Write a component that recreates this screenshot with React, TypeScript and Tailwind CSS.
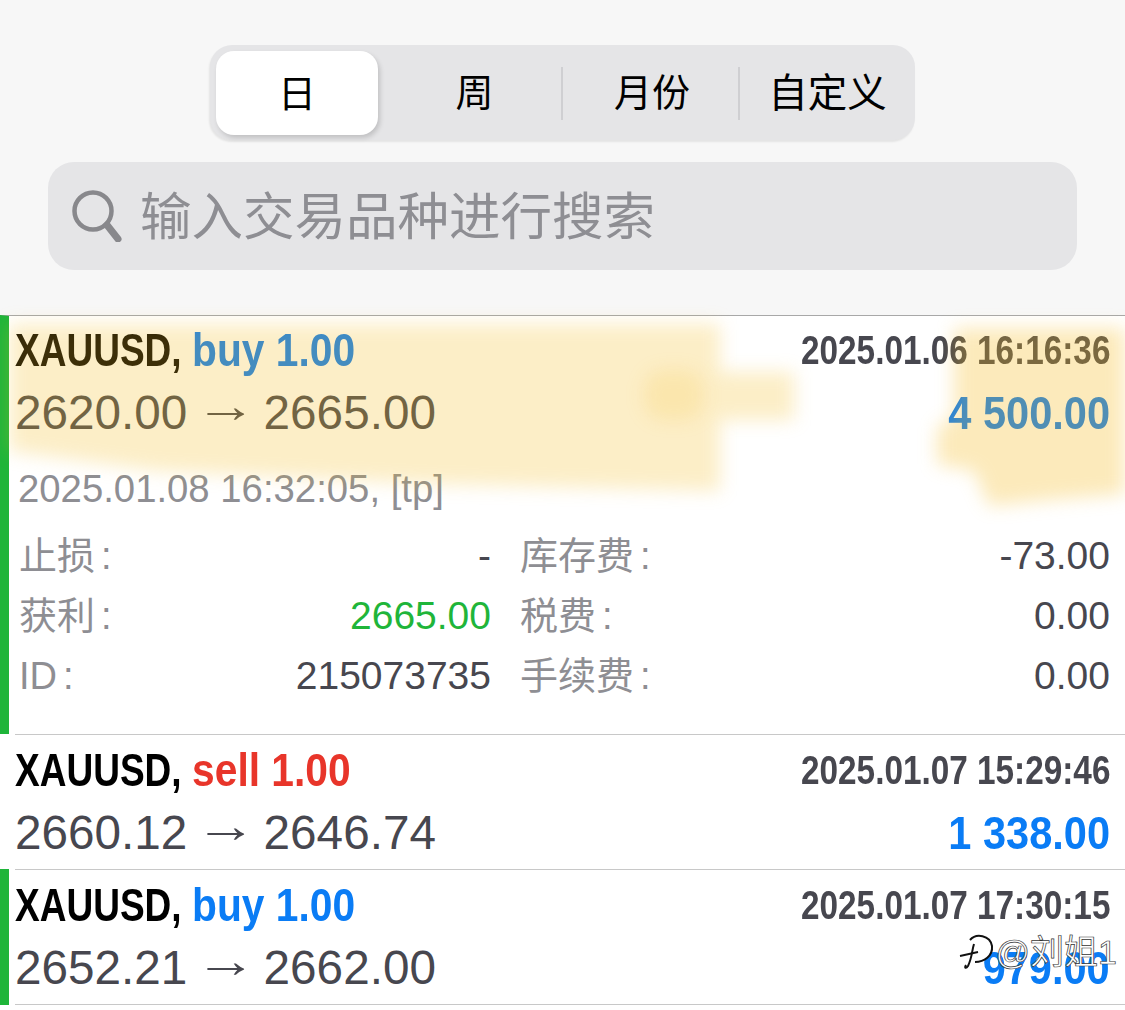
import React from "react";

const FONT = "font-['Liberation_Sans','Noto_Sans_CJK_SC',sans-serif]";

function Title({ side, lots, color }: { side: string; lots: string; color: string }) {
  return (
    <div className="h-[40px] origin-left scale-x-[0.805] whitespace-nowrap text-[46px] leading-[40px] font-bold text-black">
      XAUUSD, <span className={`inline-block origin-left scale-x-[1.1] ${color}`}>{side} {lots}</span>
    </div>
  );
}

function Stamp({ children }: { children: string }) {
  return (
    <div className="h-[40px] origin-right scale-x-[0.833] whitespace-nowrap text-[40px] leading-[40px] font-bold text-[#47474f]">
      {children}
    </div>
  );
}

function TradeHead({ side, lots, sideColor, stamp, from, to, profit }: {
  side: string;
  lots: string;
  sideColor: string;
  stamp: string;
  from: string;
  to: string;
  profit: string;
}) {
  return (
    <div className="flex flex-col gap-[23px]">
      <div className="flex items-center justify-between">
        <Title side={side} lots={lots} color={sideColor} />
        <Stamp>{stamp}</Stamp>
      </div>
      <div className="flex items-center justify-between">
        <div className="h-[40px] whitespace-nowrap text-[47.7px] leading-[40px] text-[#47474f]">
          {from} <span className="mx-[1px] inline-block -translate-y-[7px] scale-x-[1.3]">→</span> {to}
        </div>
        <div className="h-[40px] origin-right scale-x-[0.903] whitespace-nowrap text-[46px] leading-[40px] font-bold text-[#0a7cf5]">{profit}</div>
      </div>
    </div>
  );
}

function Detail({ label, value, valueColor = "text-[#47474f]" }: { label: string; value: string; valueColor?: string }) {
  return (
    <div className="flex h-[60px] items-center justify-between">
      <span className="text-[38px] text-[#8e8e93]">{label}<span className="ml-[6px]">:</span></span>
      <span className={`text-[39px] ${valueColor}`}>{value}</span>
    </div>
  );
}

export default function App() {
  return (
    <div className={`${FONT} h-[1010px] w-[1125px] overflow-hidden bg-white`}>
      {/* header */}
      <div className="flex h-[315px] flex-col items-center bg-[#f7f7f7] pt-[45px]">
        <div className="flex h-[95px] w-[705px] items-center rounded-[22px] bg-[#e5e5e7] px-[6px] text-[38px] text-black shadow-[-1px_2px_2px_rgba(0,0,0,0.08)]">
          <div className="flex h-[84px] w-[162px] items-center justify-center rounded-[18px] bg-white pt-[3px] shadow-[2px_3px_5px_rgba(0,0,0,0.16)]">日</div>
          <div className="mt-[2px] flex h-[53px] w-[185px] items-center justify-center border-r-2 border-[#cfcfd2] pl-[10px]">周</div>
          <div className="mt-[2px] flex h-[53px] w-[177px] items-center justify-center border-r-2 border-[#cfcfd2] pl-[3px]">月份</div>
          <div className="mt-[2px] flex h-[53px] flex-1 items-center justify-center pl-[6px] text-[39.5px] whitespace-nowrap">自定义</div>
        </div>
        <div className="mt-[22px] flex h-[108px] w-[1029px] items-center gap-[18px] rounded-[26px] bg-[#e5e5e7] pl-[24px]">
          <svg width="50" height="52" viewBox="0 0 50 52" fill="none" stroke="#88888c" strokeLinecap="round">
            <circle cx="21" cy="21" r="18.5" strokeWidth="4.5" />
            <path d="M35 35 L46 49" strokeWidth="7" />
          </svg>
          <span className="pt-[3px] text-[51.5px] leading-none whitespace-nowrap text-[#8e8e93]">输入交易品种进行搜索</span>
        </div>
      </div>

      {/* expanded trade */}
      <div className="relative h-[419px] border-t border-[#a8a8a8] border-l-[9px] border-l-[#1fb53a] pt-[14px] pr-[15px] pl-[6px]">
        <TradeHead side="buy" lots="1.00" sideColor="text-[#0a7cf5]" stamp="2025.01.06 16:16:36" from="2620.00" to="2665.00" profit="4 500.00" />
        <div className="mt-[36px] ml-[3px] h-[40px] text-[38.3px] leading-[40px] text-[#8e8e93]">2025.01.08 16:32:05, [tp]</div>
        <div className="mt-[17px] ml-[4px] grid grid-cols-[472px_590px] gap-x-[29px]">
          <div className="flex flex-col">
            <Detail label="止损" value="-" />
            <Detail label="获利" value="2665.00" valueColor="text-[#1fb53a]" />
            <Detail label="ID" value="215073735" />
          </div>
          <div className="flex flex-col">
            <Detail label="库存费" value="-73.00" />
            <Detail label="税费" value="0.00" />
            <Detail label="手续费" value="0.00" />
          </div>
        </div>
        {/* yellow smear laid over the text */}
        <div className="absolute top-0 left-0 h-[200px] w-[1116px] blur-[9px]">
          <div className="h-full w-full bg-[#f5ba1e]/25 [clip-path:polygon(0_8px,711px_8px,711px_175px,420px_168px,150px_155px,0_135px,0_8px,785px_56px,785px_104px,711px_104px,711px_56px,785px_56px,0_8px)]" />
        </div>
        <div className="absolute top-0 left-0 h-[200px] w-[1116px] blur-[9px]">
          <div className="h-full w-full bg-[#f5ba1e]/30 [clip-path:polygon(945px_12px,1116px_12px,1116px_178px,1040px_184px,980px_190px,965px_155px,928px_148px,928px_112px,945px_100px)]" />
        </div>
        <div className="absolute top-[54px] left-[635px] h-[50px] w-[60px] rounded-[20px] bg-[#f5ba1e]/15 blur-[9px]" />
      </div>

      {/* trade rows */}
      <div className="ml-[15px] h-[135px] border-t border-[#c8c8c8] pt-[15px] pr-[15px]">
        <TradeHead side="sell" lots="1.00" sideColor="text-[#e8352a]" stamp="2025.01.07 15:29:46" from="2660.12" to="2646.74" profit="1 338.00" />
      </div>
      <div className="relative h-[136px] border-l-[9px] border-l-[#1fb53a] pl-[6px]">
        <div className="h-full border-t border-b border-[#c8c8c8] pt-[15px] pr-[15px]">
          <TradeHead side="buy" lots="1.00" sideColor="text-[#0a7cf5]" stamp="2025.01.07 17:30:15" from="2652.21" to="2662.00" profit="979.00" />
        </div>
        {/* watermark */}
        <div className="absolute top-[63px] right-[8px] flex items-center gap-[2px]">
          <svg width="36" height="40" viewBox="0 0 36 40" fill="none" stroke="#111" strokeWidth="2">
            <path d="M12 8 C18 1 32 3 34 14 C35 24 26 30 17 30" fill="#fff" />
            <path d="M16 12 C14 18 14 26 10 34 C8 37 6 36 8 33" />
            <path d="M2 24 L20 20" />
          </svg>
          <span className="text-[34px] leading-none whitespace-nowrap text-white [-webkit-text-stroke:0.7px_#333]">@刘姐1</span>
        </div>
      </div>
    </div>
  );
}
